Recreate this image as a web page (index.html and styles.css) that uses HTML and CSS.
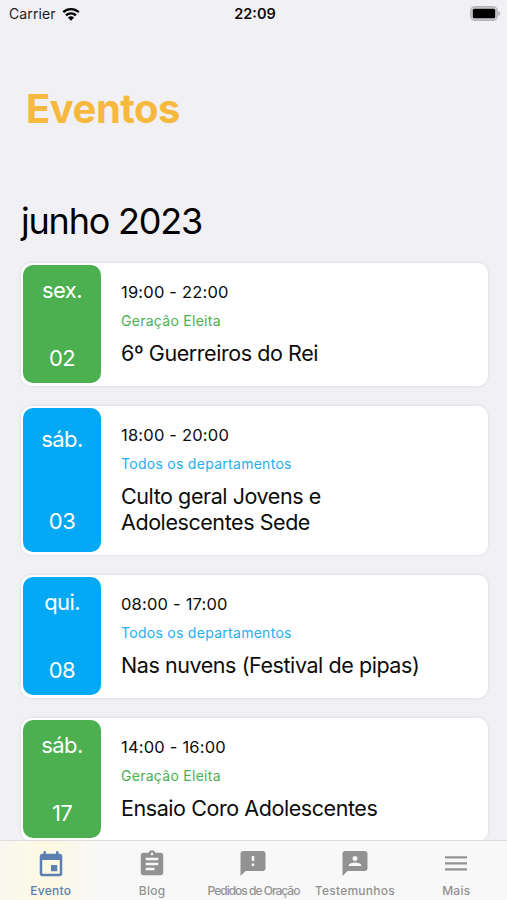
FILE: index.html
```html
<!DOCTYPE html>
<html lang="pt-BR">

<head>
    <meta charset="UTF-8">
    <meta name="viewport" content="width=device-width, initial-scale=1.0">
    <title>Eventos</title>
    <link rel="stylesheet" href="styles.css">
</head>

<body>
    <header class="status">
        <div class="carrier">
            <span>Carrier</span>
            <svg class="wifi" width="18" height="14" viewBox="0 0 18 14">
                <path d="M1.2 5.2a11.2 11.2 0 0 1 15.6 0M4 8.3a7.2 7.2 0 0 1 10 0" fill="none" stroke="#000" stroke-width="2.3"/>
                <path d="M9 13.7L5.9 10.6a4.4 4.4 0 0 1 6.2 0z"/>
            </svg>
        </div>
        <strong class="clock">22:09</strong>
        <svg class="battery" width="31" height="15" viewBox="0 0 31 15">
            <rect x=".8" y=".8" width="26.4" height="13.4" rx="4" fill="#d0d0d2" stroke="#b4b4b7" stroke-width="1.4"/>
            <rect x="2.800" y="2.800" width="22.400" height="9.400" rx="1.5"/>
            <path d="M28.3 5v5c1.200-.4 2-1.300 2-2.500s-.8-2.100-2-2.500z" fill="#b4b4b7"/>
        </svg>
    </header>
    <main>
        <h1>Eventos</h1>
        <h2>junho 2023</h2>
        <ul class="events">
            <li class="event green">
                <div class="day"><span>sex.</span><span>02</span></div>
                <div class="info">
                    <p class="time">19:00 - 22:00</p>
                    <p class="dept">Geração Eleita</p>
                    <h3>6º Guerreiros do Rei</h3>
                </div>
            </li>
            <li class="event blue tall">
                <div class="day"><span>sáb.</span><span>03</span></div>
                <div class="info">
                    <p class="time">18:00 - 20:00</p>
                    <p class="dept">Todos os departamentos</p>
                    <h3>Culto geral Jovens e<br>Adolescentes Sede</h3>
                </div>
            </li>
            <li class="event blue">
                <div class="day"><span>qui.</span><span>08</span></div>
                <div class="info">
                    <p class="time">08:00 - 17:00</p>
                    <p class="dept">Todos os departamentos</p>
                    <h3>Nas nuvens (Festival de pipas)</h3>
                </div>
            </li>
            <li class="event green">
                <div class="day"><span>sáb.</span><span>17</span></div>
                <div class="info">
                    <p class="time">14:00 - 16:00</p>
                    <p class="dept">Geração Eleita</p>
                    <h3>Ensaio Coro Adolescentes</h3>
                </div>
            </li>
        </ul>
    </main>
    <nav class="tabs">
        <a class="tab active">
            <svg viewBox="0 -0.7 24 24"><path d="M17 12h-5v5h5v-5zM16 1v2H8V1H6v2H5c-1.110 0-1.990.9-1.990 2L3 19c0 1.100.890 2 2 2h14c1.100 0 2-.9 2-2V5c0-1.100-.9-2-2-2h-1V1h-2zm3 18H5V8h14v11z"/></svg>
            <span>Evento</span>
        </a>
        <a class="tab">
            <svg viewBox="0 0 24 24"><path d="M19 3h-4.180C14.400 1.840 13.300 1 12 1c-1.300 0-2.400.840-2.820 2H5c-1.100 0-2 .9-2 2v14c0 1.100.9 2 2 2h14c1.100 0 2-.9 2-2V5c0-1.100-.9-2-2-2zm-7 0c.550 0 1 .450 1 1s-.450 1-1 1-1-.450-1-1 .450-1 1-1zm2 14H7v-2h7v2zm3-4H7v-2h10v2zm0-4H7V7h10v2z"/></svg>
            <span>Blog</span>
        </a>
        <a class="tab narrow">
            <svg viewBox="0 0.500 24 24"><path d="M20 2H4c-1.100 0-1.990.9-1.990 2L2 22l4-4h14c1.100 0 2-.9 2-2V4c0-1.100-.9-2-2-2zm-7 12h-2v-2h2v2zm0-4h-2V6h2v4z"/></svg>
            <span>Pedidos de Oração</span>
        </a>
        <a class="tab">
            <svg viewBox="0 0.500 24 24"><path d="M20 2H4c-1.100 0-1.990.9-1.990 2L2 22l4-4h14c1.100 0 2-.9 2-2V4c0-1.100-.9-2-2-2zm-8 4c1.100 0 2 .9 2 2s-.9 2-2 2-2-.9-2-2 .9-2 2-2zm5 8H7v-.570c0-1.330 3.330-2.060 5-2.060s5 .730 5 2.060V14z"/></svg>
            <span>Testemunhos</span>
        </a>
        <a class="tab">
            <svg viewBox="0 0 24 24"><path d="M3.200 5.800h17.600v1.700H3.200zM3.200 10.600h17.600v1.700H3.200zM3.200 15.400h17.600v1.700H3.200z"/></svg>
            <span>Mais</span>
        </a>
    </nav>
</body>

</html>
```
FILE: styles.css
```css
* {
    box-sizing: border-box;
}

body {
    margin: 0;
    height: 900px;
    display: flex;
    flex-direction: column;
    overflow: hidden;
    background: #f1f0f5;
    color: #0c0c0c;
    font-family: Inter, "Liberation Sans", sans-serif;
}

h1, h2, h3, p, ul {
    margin: 0;
    padding: 0;
    font-weight: 400;
    list-style: none;
}

.status {
    flex: none;
    height: 27px;
    padding: 0 6px 0 9px;
    display: grid;
    grid-template-columns: 1fr auto 1fr;
    align-items: center;
}

.carrier {
    display: flex;
    align-items: center;
    gap: 6px;
    font-size: 14px;
    letter-spacing: 0.1px;
    color: #1c1c1e;
}

.clock {
    font-size: 14.5px;
    font-weight: 600;
}

.battery {
    justify-self: end;
}

main {
    flex: 1;
    min-height: 0;
    overflow: hidden;
    padding: 0 19px 0 21px;
}

h1 {
    padding: 57px 0 0 5px;
    font-size: 40px;
    line-height: 50px;
    font-weight: 700;
    letter-spacing: -0.5px;
    color: #f6b93d;
}

h2 {
    padding-top: 62px;
    font-size: 36px;
    line-height: 50px;
    letter-spacing: -1.2px;
    color: #000;
}

.events {
    padding-top: 17px;
    display: flex;
    flex-direction: column;
    gap: 20px;
}

.event {
    height: 123px;
    padding: 2px;
    display: flex;
    gap: 20px;
    background: #fff;
    border-radius: 10px;
    box-shadow: 0 0 3px rgba(0, 0, 0, 0.12);
}

.tall {
    height: 149px;
}

.day {
    width: 78px;
    margin-bottom: 1px;
    padding: 11px 0;
    display: flex;
    flex-direction: column;
    align-items: center;
    justify-content: space-between;
    border-radius: 10px;
    color: #fff;
    font-size: 22px;
    line-height: 28px;
    letter-spacing: -0.6px;
}

.tall .day {
    padding: 17px 0;
}

.green .day {
    background: #4caf50;
}

.blue .day {
    background: #03a9f4;
}

.info {
    padding-top: 15px;
}

.time {
    font-size: 16.5px;
    line-height: 24px;
    letter-spacing: 0.2px;
}

.dept {
    padding-top: 7px;
    font-size: 14px;
    line-height: 20px;
    letter-spacing: 0.28px;
}

.green .dept {
    color: #4caf50;
}

.blue .dept {
    color: #25aef0;
}

h3 {
    padding-top: 9px;
    font-size: 21.5px;
    line-height: 26px;
    letter-spacing: -0.43px;
}

.tabs {
    flex: none;
    height: 60px;
    display: grid;
    grid-template-columns: repeat(5, 1fr);
    border-top: 1px solid #dededf;
    background: #f8f8f8;
}

.tab {
    padding-top: 8px;
    display: flex;
    flex-direction: column;
    align-items: center;
    color: #929292;
    font-size: 12px;
    line-height: 16px;
    font-weight: 500;
    letter-spacing: 0.25px;
    white-space: nowrap;
}

.tab svg {
    width: 30px;
    height: 30px;
    fill: currentColor;
}

.tab span {
    padding-top: 4px;
}

.narrow {
    letter-spacing: -1px;
}

.active {
    color: #5b7fae;
    background: linear-gradient(90deg, #f9f8f0, #fcf9e2 45%, #faf8ea 70%, #f8f8f8);
}
```
